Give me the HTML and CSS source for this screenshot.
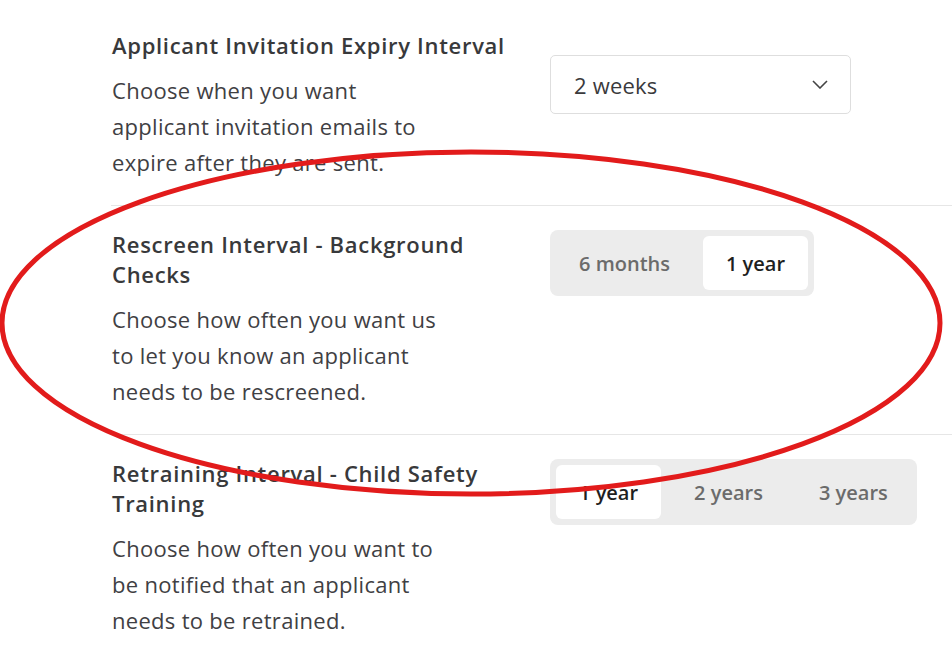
FILE: index.html
```html
<!DOCTYPE html>
<html lang="en">
  <head>
    <meta charset="UTF-8" />
    <meta name="viewport" content="width=device-width, initial-scale=1.0" />
    <title>Screening settings</title>
    <link rel="stylesheet" href="styles.css">
  </head>
  <body>
    <main class="settings">
      <section class="setting">
        <div class="info">
          <h3>Applicant Invitation Expiry Interval</h3>
          <p>Choose when you want applicant invitation emails to expire after they are sent.</p>
        </div>
        <div class="control">
          <div class="select">
            <span>2 weeks</span>
            <svg width="16" height="9" viewBox="0 0 16 9">
              <path d="M1 1l7 7 7-7" fill="none" stroke="#444" stroke-width="1.6" />
            </svg>
          </div>
        </div>
      </section>

      <section class="setting">
        <div class="info">
          <h3>Rescreen Interval - Background Checks</h3>
          <p>Choose how often you want us to let you know an applicant needs to be rescreened.</p>
        </div>
        <div class="control">
          <div class="segments">
            <button>6 months</button>
            <button class="active">1 year</button>
          </div>
        </div>
      </section>

      <section class="setting">
        <div class="info">
          <h3>Retraining Interval - Child Safety Training</h3>
          <p>Choose how often you want to be notified that an applicant needs to be retrained.</p>
        </div>
        <div class="control">
          <div class="segments">
            <button class="active">1 year</button>
            <button>2 years</button>
            <button>3 years</button>
          </div>
        </div>
      </section>
    </main>

    <!-- highlight drawn over the page -->
    <svg class="markup" width="952" height="655" viewBox="0 0 952 655">
      <ellipse cx="471" cy="323" rx="469" ry="171" fill="none" stroke="#e21b1b" stroke-width="5" />
    </svg>
  </body>
</html>
```

FILE: styles.css
```css
* {
  box-sizing: border-box;
  margin: 0;
  padding: 0;
}
body {
  font-family: "Open Sans", "Liberation Sans", sans-serif;
  background-color: #fff;
  color: #3d3e41;
  overflow: hidden;
  height: 655px;
}
.settings {
  padding: 7px 0 0 111px;
}
.setting {
  display: flex;
  padding: 23px 0 25px;
  border-bottom: 1px solid #e6e6e6;
}
.info {
  flex: 0 0 439px;
  padding-left: 1px;
}
h3 {
  font-size: 22px;
  font-weight: 600;
  line-height: 30px;
  letter-spacing: 0.7px;
  color: #38393b;
  max-width: 410px;
}
.info p {
  font-size: 22px;
  line-height: 36px;
  letter-spacing: 0.3px;
  margin-top: 12px;
  max-width: 338px;
  color: #3f4043;
}
.control {
  padding-top: 1px;
}
.select {
  margin-top: 24px;
  width: 301px;
  height: 59px;
  border: 1px solid #dedede;
  border-radius: 5px;
  display: flex;
  align-items: center;
  justify-content: space-between;
  padding: 0 22px 0 23px;
  font-size: 22px;
  letter-spacing: 0.2px;
  color: #3a3a3c;
}
.segments {
  display: inline-flex;
  gap: 10px;
  padding: 6px;
  background-color: #ececec;
  border-radius: 8px;
}
button {
  font-family: "Open Sans", "Liberation Sans", sans-serif;
  height: 54px;
  padding: 0 23px;
  font-size: 20px;
  font-weight: 600;
  color: #6b6b6b;
  background: none;
  border: none;
  border-radius: 6px;
  cursor: pointer;
}
button.active {
  background-color: #fff;
  color: #1f1f1f;
}
.markup {
  position: absolute;
  top: 0;
  left: 0;
  pointer-events: none;
}
```
